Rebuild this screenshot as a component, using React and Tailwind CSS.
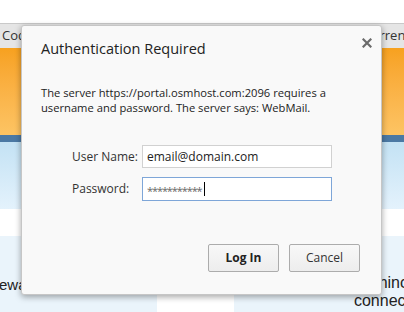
export default function App() {
  return (
    <div className="relative w-[404px] h-[312px] overflow-hidden bg-white" style={{ fontFamily: '"Liberation Sans", Arial, sans-serif' }}>
      {/* background page */}
      <div className="flex flex-col h-full">
        <div className="h-[23px] bg-white" />
        <div className="h-[25px] border-t border-[#c9c9c9] bg-[#e5e5e5] flex items-center justify-between text-[13px] text-[#333]" style={{ fontFamily: '"Open Sans", sans-serif' }}>
          <span className="pl-[2px]">Code</span>
          <span className="-mr-[6px]">urrent</span>
        </div>
        <div className="h-[87px] bg-gradient-to-b from-[#f7a11e] to-[#fdc463]" />
        <div className="h-[7px] bg-[#4b79a4]" />
        <div className="h-[67px] bg-[linear-gradient(to_bottom,#c3e2f4,#e4f2fc)]" />
        <div className="h-[27px] bg-white" />
        <div className="flex-1 flex bg-[#eaf4fb]">
          <div className="w-[163px] pt-[38px] text-[15px] text-[#222] -ml-[6px]">rewa</div>
          <div className="w-[77px] bg-white" />
          <div className="flex-1 flex flex-col items-end pt-[38px] text-[16px] leading-[18px] text-[#222]">
            <span className="-mr-[4px]">hinc</span>
            <span className="-mr-[6px]">connect</span>
          </div>
        </div>
      </div>

      {/* dialog */}
      <div
        className="absolute left-[21px] top-[25px] w-[361px] h-[270px] bg-[#f9f9f9] border border-[#c6c6c6] rounded-[3px] shadow-[0_2px_6px_rgba(0,0,0,0.35)] text-[#222]"
        style={{ fontFamily: '"Open Sans", sans-serif' }}
      >
        <div className="absolute right-[9px] top-[12px]">
          <svg width="10" height="10" viewBox="0 0 10 10">
            <path d="M1.5 1.5L8.5 8.5M8.5 1.5L1.5 8.5" stroke="#6b6b6b" strokeWidth="2.2" strokeLinecap="square" />
          </svg>
        </div>
        <div className="pl-[19px] pt-[12px] text-[14.5px] leading-[22px] text-[#222]">Authentication Required</div>
        <div className="pl-[19px] pt-[25px] text-[11.2px] leading-[15px] text-[#222]">
          <div>The server https://portal.osmhost.com:2096 requires a</div>
          <div>username and password. The server says: WebMail.</div>
        </div>
        <div className="mt-[30px] flex flex-col gap-[9px]">
          <div className="flex items-center">
            <div className="w-[120px] pl-[50px] text-[12px] text-[#333]">User Name:</div>
            <div className="w-[190px] h-[23px] border border-[#d1d1d1] bg-white flex items-center pl-[4px] text-[12px] text-[#222]">email@domain.com</div>
          </div>
          <div className="flex items-center">
            <div className="w-[120px] pl-[50px] text-[12px] text-[#333]">Password:</div>
            <div className="w-[190px] h-[24px] border border-[#7ea6d8] bg-white flex items-center pl-[4px] text-[11px] text-[#666]">
              <span className="tracking-[-1.1px] leading-none pt-[2px]">***********</span>
              <span className="ml-[2px] w-px h-[14px] bg-black" />
            </div>
          </div>
        </div>
        <div className="absolute left-[186px] top-[218px] flex gap-[10px]">
          <button className="w-[71px] h-[28px] border border-[#acacac] rounded-[2px] bg-[linear-gradient(to_bottom,#f8f8f8,#ededed)] text-[12px] font-bold text-[#222]">Log In</button>
          <button className="w-[71px] h-[28px] border border-[#acacac] rounded-[2px] bg-[linear-gradient(to_bottom,#f8f8f8,#ededed)] text-[12px] text-[#333]">Cancel</button>
        </div>
      </div>
    </div>
  );
}
